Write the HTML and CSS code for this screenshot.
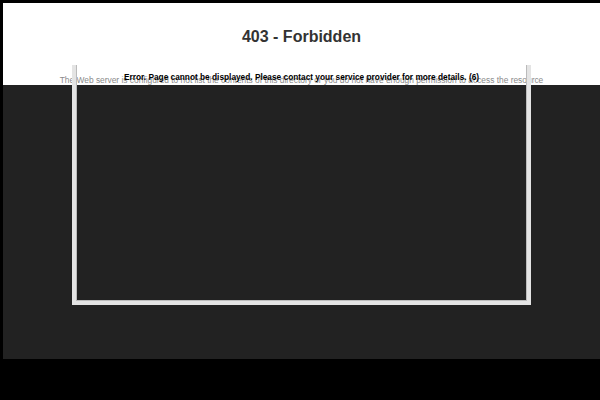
FILE: index.html
```html
<!DOCTYPE html>
<html>
<head>
<meta charset="utf-8">
<link rel="stylesheet" href="styles.css">
</head>
<body>
<div class="frame">
  <div class="head">
    <h1 class="title">403 - Forbidden</h1>
    <p class="desc">The Web server is configured to not list the contents of this directory or you do not have enough permission to access the resource</p>
  </div>
  <div class="dark"></div>
  <div class="box"></div>
  <p class="error">Error. Page cannot be displayed. Please contact your service provider for more details. (6)</p>
</div>
</body>
</html>
```
FILE: styles.css
```css
html, body {
  margin: 0;
  padding: 0;
  background: #000;
  width: 600px;
  height: 400px;
  overflow: hidden;
  font-family: "Liberation Sans", Arial, sans-serif;
}
.frame {
  position: relative;
  margin: 3px 0 0 3px;
  width: 597px;
  height: 356px;
  background: #222;
  display: flex;
  flex-direction: column;
}
.head {
  background: #fff;
  height: 82px;
  display: flex;
  flex-direction: column;
  align-items: center;
}
.title {
  margin: 25px 0 0 0;
  font-size: 16px;
  font-weight: bold;
  color: #333;
  line-height: 18px;
}
.desc {
  margin: 29px 0 0 0;
  font-size: 8.4px;
  line-height: 10px;
  color: #8a8a8a;
  white-space: nowrap;
}
.box {
  position: absolute;
  left: 69px;
  top: 62px;
  width: 451px;
  height: 236px;
  border: 4px solid #e4e4e4;
  border-top: none;
  box-shadow: inset 0 -1px 0 #bbb, inset 1px 0 0 #bbb, inset -1px 0 0 #bbb;
}
.error {
  position: absolute;
  left: 0;
  right: 0;
  top: 69px;
  margin: 0;
  text-align: center;
  font-size: 8.3px;
  line-height: 10px;
  font-weight: bold;
  color: #000;
  white-space: nowrap;
}
```
